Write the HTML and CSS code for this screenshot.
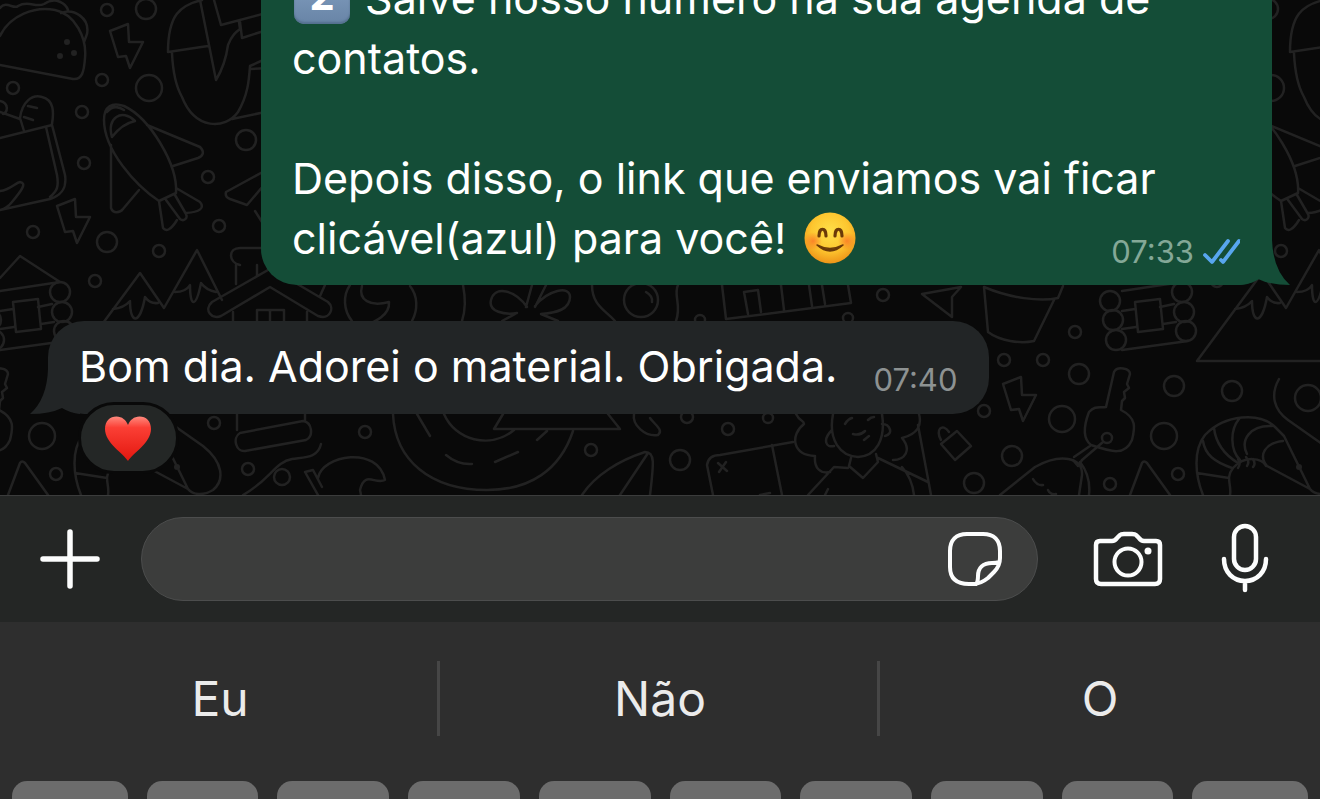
FILE: index.html
```html
<!DOCTYPE html>
<html lang="pt-BR">
<head>
<meta charset="utf-8">
<meta name="viewport" content="width=device-width, initial-scale=1">
<title>Conversa</title>
<link rel="stylesheet" href="styles.css">
</head>
<body>
<main class="chat">
  <svg class="doodles" width="1320" height="495" viewBox="0 0 1320 495" aria-hidden="true">
    <defs>
      <path id="bolt" d="M110 31L128 24L129 42L143 42L130 68L126 56L118 57Z"/>
      <g id="tile">
        <path d="M0 36C10 15 35 6 55 10C75 14 87 38 85 58C84 72 82 80 73 79L0 65M61 13C74 8 90 18 87 34L84 42M0 8C6 0 14 10 18 6C28 0 36 8 44 4C56 -4 66 4 68 10"/>
        <path class="dot" d="M64 42a3 3 0 1 0 6 0a3 3 0 1 0-6 0M71 53a3 3 0 1 0 6 0a3 3 0 1 0-6 0M57 56a3 3 0 1 0 6 0a3 3 0 1 0-6 0"/>
        <circle cx="107" cy="10" r="6"/><circle cx="146" cy="9" r="10"/><circle cx="102" cy="80" r="6"/><circle cx="149" cy="88" r="13"/>
        <circle cx="13" cy="88" r="6"/><circle cx="82" cy="112" r="6"/><circle cx="84" cy="163" r="6"/><circle cx="246" cy="140" r="10"/>
        <circle cx="208" cy="177" r="6"/><circle cx="219" cy="226" r="6"/><circle cx="159" cy="251" r="6"/><circle cx="107" cy="242" r="10"/>
        <circle cx="33" cy="232" r="6"/><circle cx="95" cy="281" r="6"/><circle cx="42" cy="436" r="13"/><circle cx="56" cy="474" r="6"/>
        <use href="#bolt"/><use href="#bolt" x="-53" y="175"/>
        <path d="M0 138L52 125L65 175C67 188 62 195 50 199L0 210M46 127L57 175C59 187 57 191 50 197M24 131L20 118C22 102 32 94 42 97C54 100 54 112 52 124M28 106L37 108M24 117L33 120M0 112L20 119M0 101C9 103 8 112 3 114M0 191C10 190 15 183 20 182C27 183 22 190 12 202C8 207 4 209 0 210"/>
        <path d="M104 120C104 106 112 102 124 106C150 118 178 165 176 193L159 201C135 185 104 150 104 120ZM112 137C106 118 122 108 135 121C126 123 118 129 112 137ZM107 112C112 106 118 106 124 110M147 125L200 147C205 152 203 156 198 158L173 166M111 145V208C113 214 120 213 123 209L139 190M159 201L163 228C166 232 171 230 177 220M176 188L200 202C205 208 200 212 186 213M166 200L180 219C184 222 188 218 186 214L175 195"/>
        <path d="M202 0C180 5 168 15 168 52L208 46M172 53C173 75 178 90 182 97C195 130 225 130 238 112C248 95 249 80 250 66L270 57M200 0L216 80C222 70 226 60 228 45C232 35 236 32 240 29L239 22M214 0L221 25L270 12M240 22L242 38L270 29M232 119L270 111M250 69L270 68"/>
        <path d="M270 168L226 192C225 196 227 198 230 199L247 205L270 178M262 222L255 211"/>
        <path d="M0 278L20 256L60 282M0 291L60 282M13 302L38 299L41 329L16 332ZM38 307L52 304M0 311L13 309M41 324L54 322M0 329L14 327M0 350L66 341"/>
        <circle cx="60" cy="292" r="10"/><circle cx="62" cy="312" r="10"/><circle cx="64" cy="331" r="10"/>
        <circle cx="-12" cy="301" r="10"/><circle cx="-9" cy="320" r="10"/><circle cx="-6" cy="340" r="10"/>
        <path d="M75 361L140 273L164 308L197 250L222 300M75 361H220M113 309Q124 308 130 301C130 325 140 325 145 297Q150 304 158 303M175 292Q186 292 190 285C190 308 196 308 201 283Q206 290 216 292"/>
        <path d="M8 495L20 463Q22 460 25 463L48 495"/>
      </g>
      <g id="marine">
        <path d="M1203 495C1195 475 1193 450 1205 435C1225 414 1260 412 1275 427L1284 436L1310 489L1267 466C1258 455 1265 443 1283 441M1230 495C1232 485 1225 478 1233 468C1245 455 1262 458 1266 466M1197 473L1229 478M1203 441C1205 455 1215 462 1232 468M1214 428C1216 445 1225 455 1238 463M1239 419C1230 430 1230 450 1240 460M1272 426C1250 425 1240 440 1247 454"/>
        <path d="M1238 459q3 5 0 9M1246 457q4 5 1 9M1253 459q3 5 0 8"/>
        <circle class="dot" cx="1299" cy="467" r="3"/>
        <path d="M1279 379C1270 395 1274 410 1288 420L1325 446C1345 462 1347 480 1335 490C1325 496 1315 495 1310 489"/>
        <path d="M1106 407L1114 372C1117 366 1130 368 1130 374L1127 384L1129 388L1124 392L1125 398L1122 401L1121 410C1137 418 1135 428 1132 440C1125 456 1112 452 1091 445C1082 438 1084 425 1089 412C1095 405 1100 408 1106 407ZM1103 442L1082 460M1090 446L1074 457M1082 460L1078 466L1073 460"/>
        <circle cx="1107" cy="438" r="5"/>
      </g>
    </defs>
    <use href="#tile"/><use href="#tile" x="1122"/>
    <use href="#marine"/><use href="#marine" x="-1122"/>
    <use href="#bolt" x="893" y="353"/>
    <path d="M236 284V265M257 275V265M240 265C228 262 228 248 240 248H265M268 270L212 302C203 310 212 320 221 316L270 287L318 316C330 320 335 308 328 302L270 268M233 312V330M307 312V330M257 330V310H284V330M270 310V330M325 285L320 296"/>
    <path d="M362 286C358 300 370 307 389 302C390 315 375 322 365 325M350 285C343 295 343 310 352 321M410 286C418 296 418 310 412 321M463 285C466 300 465 312 462 321"/>
    <path d="M527 307C515 290 495 285 491 300C488 312 505 315 517 313L502 321M526 307L532 285M535 307L546 285M535 306C548 290 570 285 570 297C570 310 555 313 541 314L558 321"/>
    <path d="M592 285C592 305 605 310 615 321M678 285C673 295 682 305 676 321M646 292Q653 296 652 302"/>
    <path d="M722 285L726 319L851 303L848 285M748 314L744 292L758 290L761 312M781 285L784 310M809 285L812 306M822 285L825 304"/>
    <path d="M922 294L961 287L952 297V317ZM984 287L988 332C1000 341 1020 344 1034 341L1054 300M984 287C1010 298 1040 302 1058 298L1063 286"/>
    <path d="M941 444L957 431L971 446L955 460ZM941 440C935 430 942 422 949 432"/>
    <path d="M1000 495L1035 467C1060 453 1083 457 1082 475L1079 495M1080 462C1088 472 1090 485 1089 495M1033 479q4 7 10 6M1048 490q2 5 8 4"/>
    <path d="M713 495L707 465C708 458 712 455 720 455L793 442M772 445L782 495M718 463L727 471M726 462L719 472M760 495L770 493"/>
    <path d="M582 495C595 475 620 460 645 452C655 452 654 462 650 495M648 453L620 495"/>
    <path d="M393 414C395 460 430 490 487 490C530 490 560 470 573 431M444 414C455 440 490 450 514 430M417 414L430 436M503 414L494 429H620L608 414M446 455Q458 465 472 464M495 462L518 452M537 440L547 431"/>
    <path d="M634 414C632 425 645 437 658 435C664 430 655 425 650 418"/>
    <path d="M237 414V430M305 414V420M240 433L303 421C312 422 314 436 306 440L245 451C236 452 232 438 240 433Z"/>
    <path d="M243 495C270 480 275 462 292 459C305 457 318 458 321 444M305 472L318 495M305 472L313 470L322 487M318 478C322 455 378 445 385 480C375 485 365 470 360 490L361 495"/>
    <path d="M833 414C828 440 840 456 858 457C876 456 886 440 882 414M845 424q3-5 7-6M868 420q3-3 6-3M853 434Q860 436 865 431M864 440l5-4M796 414C800 422 804 420 804 424C790 435 792 455 815 456C814 468 820 474 830 472M832 430C822 440 826 448 834 446M851 458L849 466L863 478L878 462L876 454M808 495L834 467L848 468M878 458L928 482M902 467Q912 478 914 495M919 414C922 425 918 434 902 438C912 450 905 460 893 460M882 424C890 424 894 434 885 436M918 425L931 495M825 495l3-6"/>
    <circle cx="641" cy="300" r="17"/><circle cx="700" cy="320" r="5"/><circle cx="848" cy="318" r="5"/><circle cx="883" cy="295" r="6"/>
    <circle cx="1075" cy="332" r="6"/><circle cx="1004" cy="360" r="6"/><circle cx="1043" cy="360" r="6"/><circle cx="1079" cy="374" r="10"/>
    <circle cx="1174" cy="386" r="10"/><circle cx="1232" cy="391" r="10"/><circle cx="1308" cy="398" r="13"/><circle cx="984" cy="411" r="6"/>
    <circle cx="1062" cy="419" r="13"/><circle cx="1012" cy="456" r="10"/><circle cx="974" cy="483" r="10"/><circle cx="1110" cy="484" r="6"/>
    <circle cx="214" cy="423" r="6"/><circle cx="248" cy="469" r="6"/><circle cx="365" cy="432" r="6"/><circle cx="282" cy="477" r="8"/>
    <circle cx="591" cy="450" r="6"/><circle cx="680" cy="460" r="10"/><circle cx="728" cy="429" r="6"/><circle cx="687" cy="417" r="6"/><circle cx="768" cy="418" r="5"/>
  </svg>

  <article class="bubble bubble--out">
    <p class="bubble__text"><span class="keycap">2</span> Salve nosso número na sua agenda de<br>contatos.</p>
    <p class="bubble__text">Depois disso, o link que enviamos vai ficar<br>clicável(azul) para você!
      <svg class="smile" viewBox="0 0 52 52" role="img" aria-label="Rosto sorridente">
        <defs>
          <radialGradient id="face" cx="50%" cy="38%" r="62%"><stop offset="0" stop-color="#ffe04a"/><stop offset=".6" stop-color="#fdc62f"/><stop offset="1" stop-color="#ee9418"/></radialGradient>
          <radialGradient id="blush"><stop offset="0" stop-color="#fb7526" stop-opacity=".8"/><stop offset="1" stop-color="#fb7526" stop-opacity="0"/></radialGradient>
        </defs>
        <circle cx="26" cy="26" r="25.5" fill="url(#face)"/>
        <circle cx="9" cy="29" r="9" fill="url(#blush)"/><circle cx="43" cy="29" r="9" fill="url(#blush)"/>
        <path d="M15 24C15 15 22 15 22 24M31 24C31 15 38 15 38 24" fill="none" stroke="#6b3a08" stroke-width="3.200" stroke-linecap="round"/>
        <path d="M13 33Q26 45 39 33Q26 40 13 33Z" fill="#6b3a08" stroke="#6b3a08" stroke-width="1.500" stroke-linejoin="round"/>
      </svg>
    </p>
    <span class="bubble__meta"><time>07:33</time>
      <svg class="ticks" viewBox="0 0 40 28" role="img" aria-label="Lida"><path d="M3 17L10 24L26 3M19 22L21 24L37 3" fill="none" stroke="#58a6ee" stroke-width="3.800" stroke-linecap="round" stroke-linejoin="round"/></svg>
    </span>
    <svg class="tail tail--out" viewBox="0 0 50 45" aria-hidden="true"><path d="M0 45Q10 44 18 39Q30 45 50 45Q33 30 32 0H0Z"/></svg>
  </article>

  <article class="bubble bubble--in">
    <p class="bubble__text">Bom dia. Adorei o material. Obrigada.</p>
    <span class="bubble__meta"><time>07:40</time></span>
    <svg class="tail tail--in" viewBox="0 0 50 45" aria-hidden="true"><path d="M50 45Q40 44 32 39Q20 45 0 45Q17 30 18 0H50Z"/></svg>
    <button class="reaction" type="button" aria-label="Reação: coração">
      <svg viewBox="0 0 46 46" aria-hidden="true">
        <defs><linearGradient id="heart" x1="0" y1="0" x2="0" y2="1"><stop offset="0" stop-color="#ff8a7e"/><stop offset=".25" stop-color="#fb3f35"/><stop offset="1" stop-color="#e3170f"/></linearGradient></defs>
        <path d="M23 45C18 37 0 27 0 13C0 5 5 .500 11.500 .500C17 .500 21 4 23 9C25 4 29 .500 34.500 .500C41 .500 46 5 46 13C46 27 28 37 23 45Z" fill="url(#heart)"/>
      </svg>
    </button>
  </article>
</main>

<form class="composer">
  <button class="icon-button icon-button--plus" type="button" aria-label="Anexar">
    <svg width="60" height="60" viewBox="0 0 60 60" aria-hidden="true"><path d="M30 3V57M3 30H57" stroke-width="5.500"/></svg>
  </button>
  <div class="field">
    <input class="field__input" type="text" aria-label="Mensagem">
    <button class="icon-button" type="button" aria-label="Figurinhas">
      <svg width="56" height="56" viewBox="0 0 56 56" aria-hidden="true"><path d="M20 3H36C47 3 53 9 53 20V27C53 33 51 37 47 41L41 47C36 51 32 53 26 53H22C9 53 3 47 3 36V20C3 9 9 3 20 3ZM52 31C50 32 48 32 45 32C36 32 31 37 31 45C31 48 31 51 29 53" stroke-width="4"/></svg>
    </button>
  </div>
  <button class="icon-button icon-button--camera" type="button" aria-label="Câmera">
    <svg width="70" height="56" viewBox="0 0 70 56" aria-hidden="true"><path d="M7 10H19Q22 10 24 7L27 4Q28 3 31 3H39Q42 3 43 4L46 7Q48 10 51 10H63Q67 10 67 14V48Q67 53 62 53H8Q3 53 3 48V14Q3 10 7 10Z" stroke-width="4.500"/><circle cx="35" cy="31" r="13.500" stroke-width="4"/><circle class="spot" cx="55" cy="20" r="3.500"/></svg>
  </button>
  <button class="icon-button icon-button--mic" type="button" aria-label="Gravar áudio">
    <svg width="48" height="72" viewBox="0 0 48 72" aria-hidden="true"><rect x="13" y="3" width="22" height="44" rx="11" stroke-width="4.500"/><path d="M3 36C3 49 12 58 24 58C36 58 45 49 45 36M24 58V67" stroke-width="4.500"/></svg>
  </button>
</form>

<section class="keyboard" aria-label="Teclado">
  <div class="suggestions">
    <button type="button">Eu</button>
    <button type="button">Não</button>
    <button type="button">O</button>
  </div>
  <div class="keys">
    <button type="button" aria-label="Q"></button><button type="button" aria-label="W"></button><button type="button" aria-label="E"></button><button type="button" aria-label="R"></button><button type="button" aria-label="T"></button><button type="button" aria-label="Y"></button><button type="button" aria-label="U"></button><button type="button" aria-label="I"></button><button type="button" aria-label="O"></button><button type="button" aria-label="P"></button>
  </div>
</section>
</body>
</html>
```
FILE: styles.css
```css
* { box-sizing: border-box; }

body {
  margin: 0;
  height: 100vh;
  display: flex;
  flex-direction: column;
  overflow: hidden;
  background: #2e2e2e;
  color: #fff;
  font-family: Inter, "Liberation Sans", sans-serif;
}

button {
  margin: 0;
  padding: 0;
  border: 0;
  background: none;
  color: inherit;
  font: inherit;
  cursor: pointer;
}

svg { display: block; }

/* Conversation */
.chat {
  position: relative;
  flex: 1;
  min-height: 0;
  display: flex;
  flex-direction: column;
  justify-content: flex-end;
  gap: 36px;
  padding: 0 48px 81px;
  overflow: hidden;
  background: #090909;
}

.doodles {
  position: absolute;
  left: 0;
  bottom: 0;
  fill: none;
  stroke: #222;
  stroke-width: 2.5px;
  stroke-linecap: round;
  stroke-linejoin: round;
}

.doodles .dot { fill: #222; stroke: none; }

.bubble {
  position: relative;
  flex: none;
  border-radius: 36px;
}

.bubble--out {
  align-self: flex-end;
  width: calc(100% - 213px);
  padding: 15px 31px 17px;
  background: #144d37;
  border-bottom-right-radius: 32px;
}

.bubble--in {
  align-self: flex-start;
  display: flex;
  gap: 36px;
  padding: 15px 32px 18px 31px;
  background: #222526;
}

.bubble__text {
  margin: 0 0 60px;
  font-size: 43px;
  line-height: 60px;
  white-space: nowrap;
}

.bubble__text:last-of-type { margin-bottom: 0; }

.bubble__meta {
  display: flex;
  align-items: center;
  gap: 8px;
  color: #8d9292;
  font-size: 31px;
  line-height: 36px;
}

.bubble--in .bubble__meta { align-self: flex-end; margin-bottom: -2px; }

.bubble--out .bubble__meta {
  position: absolute;
  right: 30px;
  bottom: 15px;
  color: #84a897;
}

.ticks { width: 40px; height: 28px; }

.keycap {
  display: inline-block;
  width: 56px;
  height: 52px;
  margin: 0 3px 0 2px;
  border-radius: 10px;
  background: linear-gradient(#86a3c4, #6884a6);
  box-shadow: inset 0 -2px 2px #55708f;
  font-size: 40px;
  font-weight: 700;
  line-height: 48px;
  text-align: center;
  vertical-align: 4px;
}

.smile {
  display: inline-block;
  width: 52px;
  height: 52px;
  margin-left: 6px;
  vertical-align: -10px;
}

.tail {
  position: absolute;
  bottom: 0;
  width: 50px;
  height: 45px;
}

.tail--out { right: -18px; fill: #144d37; }
.tail--in { left: -18px; fill: #222526; }

.reaction {
  position: absolute;
  left: 30px;
  top: 81px;
  width: 101px;
  height: 72px;
  display: flex;
  align-items: center;
  justify-content: center;
  padding: 2px 2px 0 0;
  border: 3px solid #090909;
  border-radius: 36px;
  background: #242726;
}

.reaction svg { width: 46px; height: 46px; }

/* Message composer */
.composer {
  flex: none;
  display: flex;
  align-items: center;
  margin: 0;
  padding: 21px 51px 21px 40px;
  border-top: 1px solid #3b3c3c;
  background: #242625;
}

.icon-button { flex: none; }

.icon-button svg {
  fill: none;
  stroke: #fcfdfd;
  stroke-linecap: round;
  stroke-linejoin: round;
}

.icon-button .spot { fill: #fcfdfd; stroke: none; }

.icon-button--plus { margin-right: 41px; }
.icon-button--camera { margin: 0 58px 0 55px; }

.field {
  flex: 1;
  min-width: 0;
  height: 84px;
  display: flex;
  align-items: center;
  padding: 0 34px 0 36px;
  border: 1px solid #4c4d4d;
  border-radius: 42px;
  background: #3c3d3c;
}

.field__input {
  flex: 1;
  min-width: 0;
  height: 60px;
  padding: 0;
  border: 0;
  outline: 0;
  background: none;
  color: inherit;
  font: inherit;
  font-size: 43px;
}

/* Keyboard */
.keyboard { flex: none; background: #2e2e2e; }

.suggestions {
  display: grid;
  grid-template-columns: repeat(3, 1fr);
  padding: 39px 0 45px;
}

.suggestions button {
  height: 75px;
  color: #ebebeb;
  font-size: 48px;
  line-height: 75px;
}

.suggestions button:not(:last-child) {
  padding-left: 3px;
  border-right: 3px solid #464646;
}

.keys {
  display: grid;
  grid-template-columns: 116fr repeat(8, 112fr) 116fr;
  gap: 19px;
  height: 18px;
  padding: 0 12px;
  overflow: hidden;
}

.keys button {
  height: 126px;
  border-radius: 15px;
  background: #6c6c6c;
}
```
